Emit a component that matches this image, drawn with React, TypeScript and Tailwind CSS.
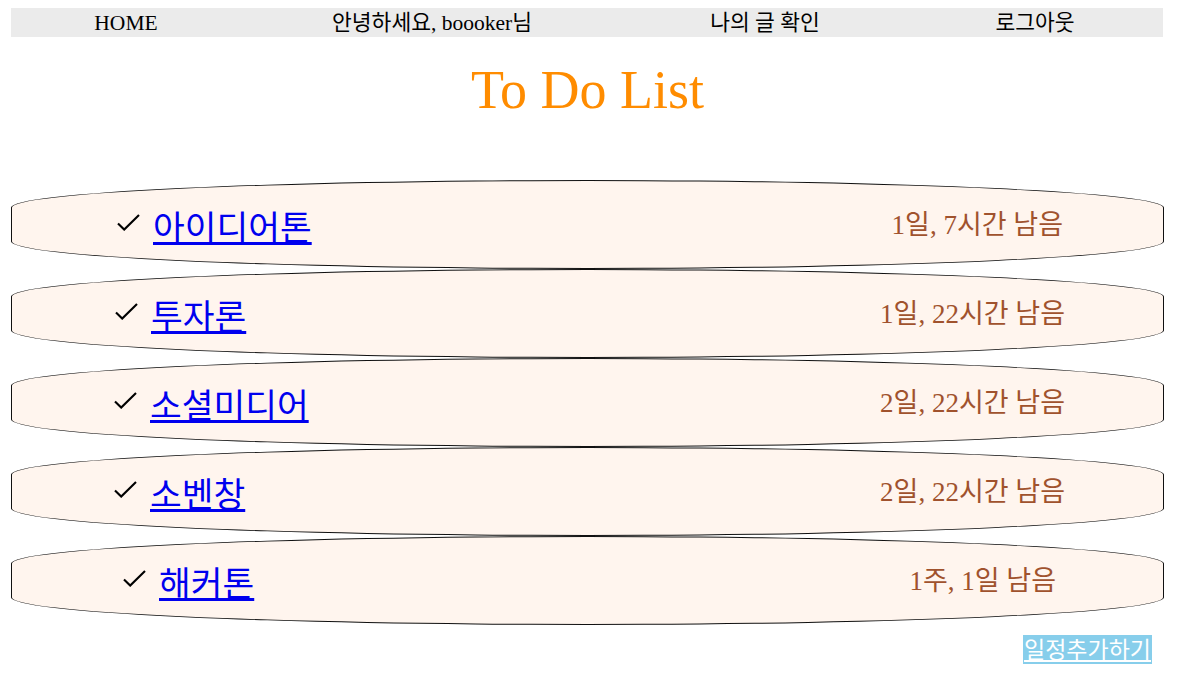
import React from 'react';

// 일정 목록 (mock data)
const todos = [
  { id: 1, title: '아이디어톤', left: '1일, 7시간 남음', pad: 'pl-[105px] pr-[100px]' },
  { id: 2, title: '투자론', left: '1일, 22시간 남음', pad: 'pl-[103px] pr-[98px]' },
  { id: 3, title: '소셜미디어', left: '2일, 22시간 남음', pad: 'pl-[102px] pr-[98px]' },
  { id: 4, title: '소벤창', left: '2일, 22시간 남음', pad: 'pl-[102px] pr-[98px]' },
  { id: 5, title: '해커톤', left: '1주, 1일 남음', pad: 'pl-[111px] pr-[107px]' },
];

const navItems = ['HOME', '안녕하세요, boooker님', '나의 글 확인', '로그아웃'];

function Check() {
  return (
    <svg width="23" height="17" viewBox="0 0 23 17" className="mr-[13px] mb-[4px] shrink-0">
      <path d="M1 9.5 L7.2 15.6 L22 1" fill="none" stroke="#000" strokeWidth="2.1" />
    </svg>
  );
}

export default function App() {
  return (
    <div className="min-h-[690px] bg-white text-black font-['Liberation_Serif','Noto_Sans_CJK_KR',serif]">
      <div className="ml-[11px] w-[1153px] pt-[8px]">
        {/* 상단 메뉴 */}
        <nav className="grid w-[1152px] h-[29px] grid-cols-[230px_382px_284px_256px] bg-[#ebebeb] text-[21.5px] leading-[24px]">
          {navItems.map((item) => (
            <a key={item} href="#" className="flex items-center justify-center text-black">
              {item}
            </a>
          ))}
        </nav>

        <h1 className="mt-[22px] text-center text-[54px] leading-[62px] text-[#ff8c00]">To Do List</h1>

        <ul className="mt-[59px]">
          {todos.map((todo) => (
            <li
              key={todo.id}
              className={`flex h-[89px] items-center justify-between rounded-[50%_/_31%] border border-[#111] bg-[#fff5ee] ${todo.pad}`}
            >
              <div className="flex items-center">
                <Check />
                <a
                  href="#"
                  className="text-[34.5px] leading-[40px] text-[#0000ee] underline decoration-[2.5px] underline-offset-[2px] font-['Noto_Sans_CJK_KR',sans-serif]"
                >
                  {todo.title}
                </a>
              </div>
              <span className="text-[27px] leading-[30px] text-[#a0522d]">{todo.left}</span>
            </li>
          ))}
        </ul>

        <div className="mt-[10px] flex justify-end pr-[12px]">
          <a
            href="#"
            className="inline-block h-[29px] bg-[#87ceeb] px-[1px] text-[23px] leading-[27px] text-white underline decoration-[1.5px] underline-offset-[2px] font-['Noto_Sans_CJK_KR',sans-serif]"
          >
            일정추가하기
          </a>
        </div>
      </div>
    </div>
  );
}
